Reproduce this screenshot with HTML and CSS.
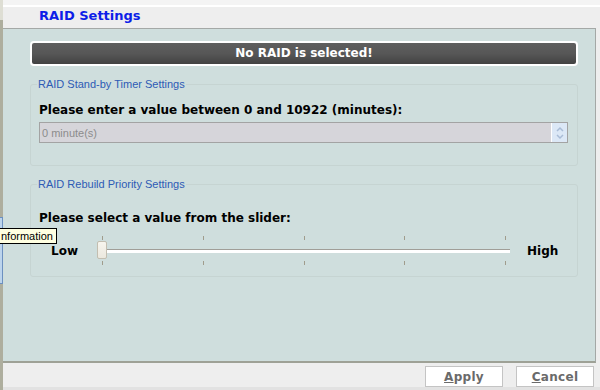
FILE: index.html
```html
<!DOCTYPE html>
<html lang="en">
<head>
    <meta charset="UTF-8">
    <title>RAID Settings</title>
    <link rel="stylesheet" href="styles.css">
</head>
<body>

    <div class="app">
        <div class="side-strip">
            <div class="side-tab"></div>
        </div>

        <div class="main">
            <div class="header">
                <h2>RAID Settings</h2>
            </div>

            <div class="panel">
                <div class="banner">No RAID is selected!</div>

                <fieldset class="group group-timer">
                    <legend>RAID Stand-by Timer Settings</legend>
                    <div class="question">Please enter a value between 0 and 10922 (minutes):</div>
                    <div class="spin-input">
                        <span class="spin-value">0 minute(s)</span>
                        <span class="spin-buttons">
                            <svg width="12" height="16" viewBox="0 0 12 16">
                                <path d="M3 6 L6 3 L9 6" fill="none" stroke="#a9bcd6" stroke-width="1.5"/>
                                <path d="M3 10 L6 13 L9 10" fill="none" stroke="#a9bcd6" stroke-width="1.5"/>
                            </svg>
                        </span>
                    </div>
                </fieldset>

                <fieldset class="group group-priority">
                    <legend>RAID Rebuild Priority Settings</legend>
                    <div class="question">Please select a value from the slider:</div>
                    <div class="slider-row">
                        <span class="slider-label">Low</span>
                        <div class="slider">
                            <div class="ticks ticks-top">
                                <i></i><i></i><i></i><i></i><i></i>
                            </div>
                            <div class="track"></div>
                            <div class="ticks ticks-bottom">
                                <i></i><i></i><i></i><i></i><i></i>
                            </div>
                            <div class="thumb"></div>
                        </div>
                        <span class="slider-label">High</span>
                    </div>
                </fieldset>
            </div>

            <div class="footer">
                <button class="btn"><u>A</u>pply</button>
                <button class="btn"><u>C</u>ancel</button>
            </div>
        </div>
    </div>

    <div class="tooltip">nformation</div>

</body>
</html>
```

FILE: styles.css
```css
/* Reset */
* {
    margin: 0;
    padding: 0;
    box-sizing: border-box;
}
body {
    font-family: 'DejaVu Sans', Verdana, sans-serif;
    background-color: #eeeeee;
    width: 600px;
    height: 390px;
    overflow: hidden;
    position: relative;
}

.app {
    display: flex;
    height: 390px;
}

/* Left edge of the window behind */
.side-strip {
    width: 3px;
    background: linear-gradient(to bottom, #deded4 0, #deded4 20px, #aeae9e 20px);
    position: relative;
}
.side-tab {
    position: absolute;
    left: 0;
    top: 217px;
    width: 3px;
    height: 67px;
    background-color: #bcd4ec;
    border-right: 1px solid #6c90c0;
    border-top: 1px solid #6c90c0;
    border-bottom: 1px solid #6c90c0;
}

.main {
    flex: 1;
    display: flex;
    flex-direction: column;
}

/* Header */
.header {
    height: 28px;
    border-top: 5px solid #f4f4f4;
    box-shadow: inset 0 1px 0 #ffffff, inset 0 2px 0 #ffffff;
    background-color: #eeeeee;
    padding-left: 36px;
}
.header h2 {
    font-size: 13px;
    font-weight: bold;
    color: #0d1ee8;
    line-height: 21px;
}

/* Main panel */
.panel {
    height: 335px;
    margin-right: 4px;
    background-color: #cfdedd;
    border-top: 1px solid #a4a8a6;
    border-right: 1px solid #a4a8a6;
    border-bottom: 2px solid #9ea196;
    padding: 12px 17px 0 27px;
}

.banner {
    height: 25px;
    border: 2px solid #ffffff;
    border-radius: 4px;
    background: linear-gradient(to bottom, #5e5e5e 0%, #575757 50%, #424242 100%);
    color: #ffffff;
    font-size: 12px;
    font-weight: bold;
    text-align: center;
    line-height: 21px;
}

/* Setting groups */
.group {
    border: 1px solid #c6d4d2;
    border-radius: 3px;
    padding: 0 9px 0 8px;
}
.group legend {
    font-family: 'Liberation Sans', Arial, sans-serif;
    font-size: 11px;
    color: #2d5bb5;
    padding: 0 1px;
    margin-left: -2px;
}
.group-timer {
    margin-top: 12px;
    height: 88px;
}
.group-priority {
    margin-top: 12px;
    height: 99px;
}

.question {
    font-size: 12px;
    font-weight: bold;
    color: #000000;
    margin-top: 13px;
}
.group-priority .question {
    margin-top: 21px;
}

/* Number input with spinner */
.spin-input {
    margin-top: 5px;
    height: 21px;
    display: flex;
    align-items: center;
    justify-content: space-between;
    background-color: #d6d5da;
    border: 1px solid #a3a3a3;
}
.spin-value {
    font-family: 'Liberation Sans', Arial, sans-serif;
    font-size: 11px;
    color: #8c8c8c;
    padding-left: 2px;
}
.spin-buttons {
    width: 16px;
    height: 19px;
    display: flex;
    align-items: center;
    justify-content: center;
    background-color: #dce8f6;
    border-left: 1px solid #ffffff;
}

/* Slider */
.slider-row {
    margin-top: 11px;
    display: flex;
    align-items: center;
}
.slider-label {
    font-size: 12px;
    font-weight: bold;
    color: #000000;
}
.slider-row .slider-label:first-child {
    margin-left: 12px;
    width: 46px;
}
.slider-row .slider-label:last-child {
    margin-left: 15px;
}
.slider {
    position: relative;
    width: 415px;
    height: 29px;
    display: flex;
    flex-direction: column;
    justify-content: space-between;
}
.ticks {
    display: flex;
    justify-content: space-between;
    padding: 0 6px 0 5px;
    height: 4px;
}
.ticks i {
    width: 1px;
    height: 4px;
    background-color: #a09c8c;
}
.track {
    margin: 0 0 0 2px;
    height: 4px;
    border-top: 1px solid #a09e98;
    background-color: #ffffff;
    width: 411px;
}
.thumb {
    position: absolute;
    left: 0;
    top: 5px;
    width: 10px;
    height: 18px;
    background: linear-gradient(to bottom, #f7f5ee, #ebe8de);
    border: 1px solid #c3beb0;
    border-radius: 2px;
}

/* Footer buttons */
.footer {
    flex: 1;
    display: flex;
    justify-content: flex-end;
    gap: 13px;
    padding: 3px 6px 0 0;
    border-bottom: 3px solid #e2e2e2;
}
.btn {
    width: 78px;
    height: 21px;
    background-color: #ffffff;
    border: 1px solid #c4c4c4;
    font-family: 'DejaVu Sans', Verdana, sans-serif;
    font-size: 12px;
    font-weight: bold;
    color: #6a6a6a;
    letter-spacing: 0.3px;
}

/* Tooltip from the window behind */
.tooltip {
    position: absolute;
    left: -2px;
    top: 228px;
    padding: 1px 3px 1px 2px;
    background-color: #ffffe1;
    border: 1px solid #000000;
    font-family: 'Liberation Sans', Arial, sans-serif;
    font-size: 11px;
    color: #000000;
}
```
